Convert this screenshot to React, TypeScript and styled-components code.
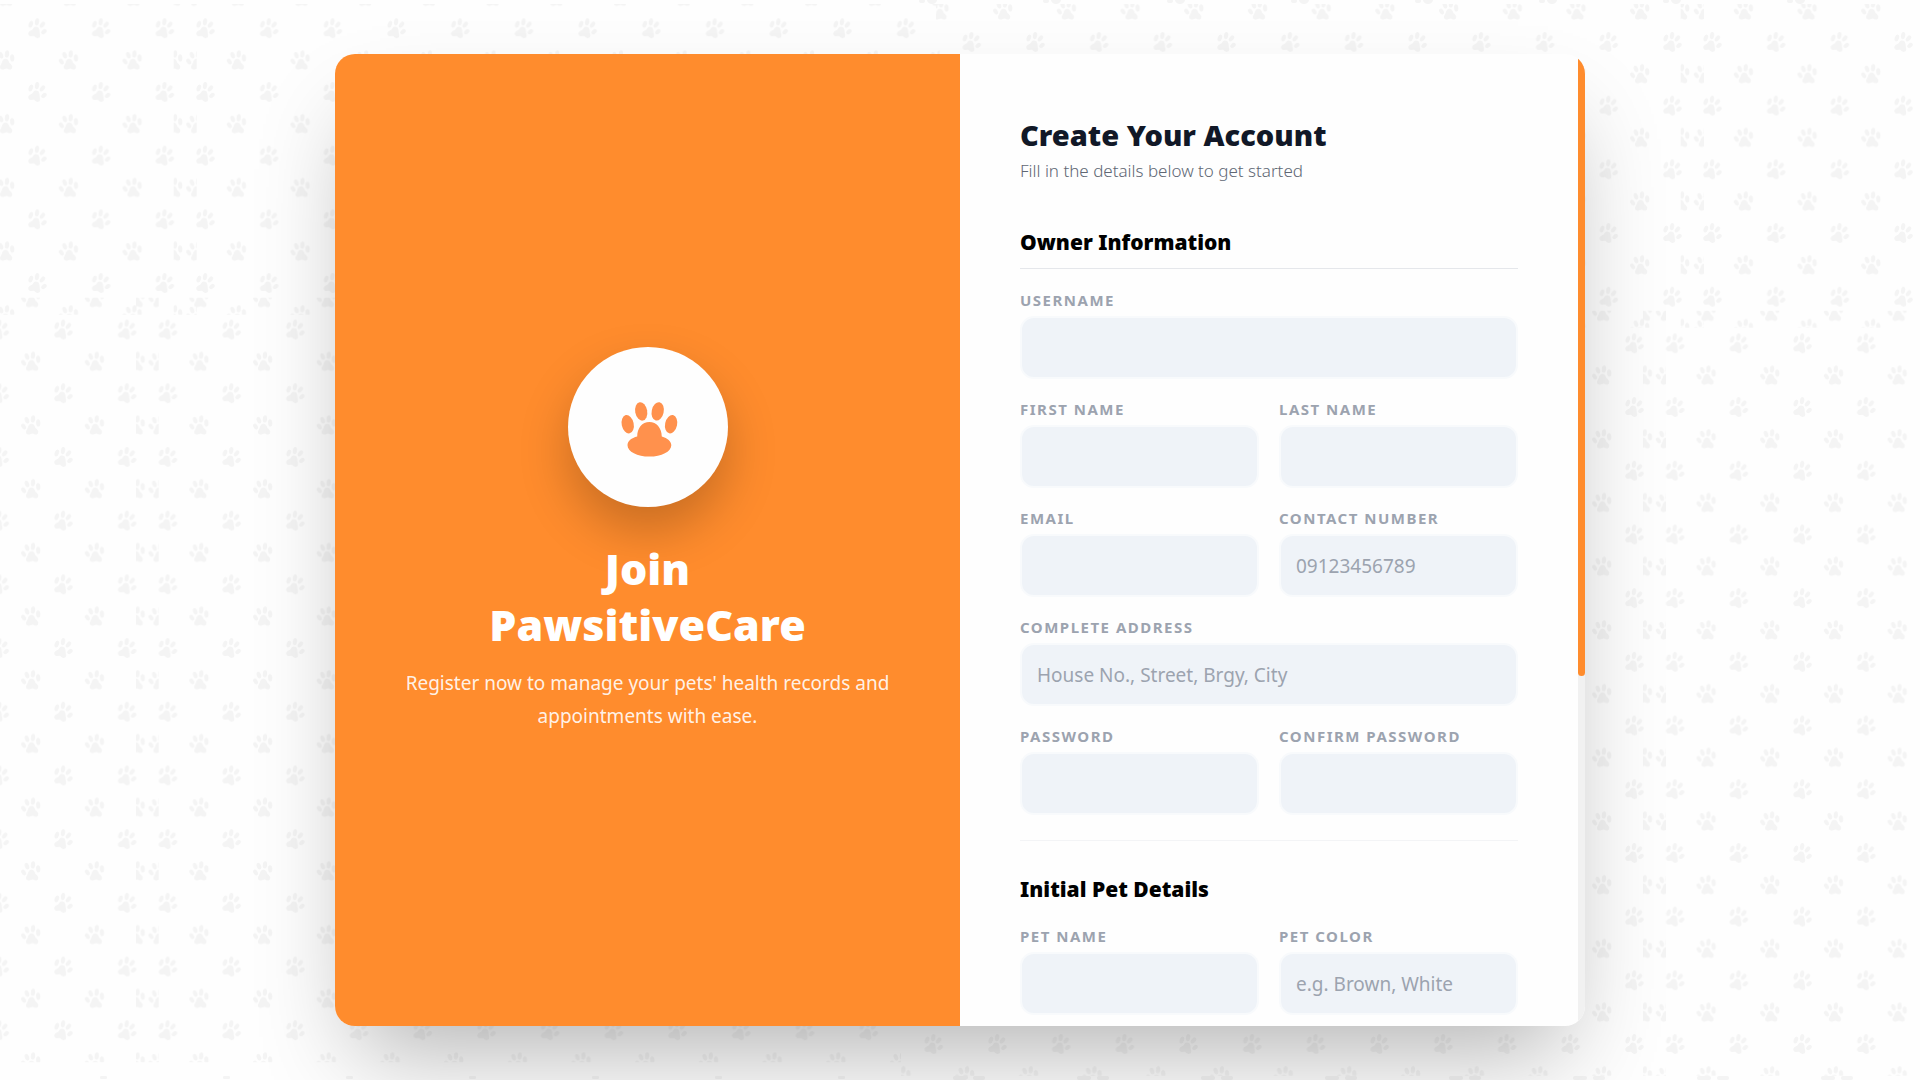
import React, { useId } from "react";
import styled, { createGlobalStyle } from "styled-components";

const ORANGE = "#ff8c2d";
const STEP = 63.7;

const GlobalStyle = createGlobalStyle`
  *, *::before, *::after { box-sizing: border-box; }
  html, body { margin: 0; background: #fefefe; }
  body, input { font-family: "Noto Sans", "Open Sans", "Liberation Sans", sans-serif; }
`;

const Page = styled.main`
  min-height: 100vh;
  display: flex;
  align-items: center;
  justify-content: center;
  overflow: hidden;
  position: relative;
  isolation: isolate;
`;

const Wallpaper = styled.svg`
  position: absolute;
  inset: 0;
  width: 100%;
  height: 100%;
  z-index: -1;
`;

const Card = styled.div`
  width: 100%;
  max-width: 1250px;
  height: 90vh;
  display: grid;
  grid-template-columns: 1fr 1fr;
  border-radius: 20px;
  overflow: hidden;
  background: #fefefe;
  box-shadow: 0 48px 90px -22px rgba(0, 0, 0, 0.29);
`;

const Welcome = styled.section`
  display: flex;
  flex-direction: column;
  align-items: center;
  justify-content: center;
  padding: 60px;
  background: ${ORANGE};
  color: #fff;
  text-align: center;
`;

const LogoDisc = styled.div`
  width: 160px;
  height: 160px;
  border-radius: 50%;
  margin-bottom: 34px;
  background: #fefefe;
  box-shadow: 0 24px 50px rgba(0, 0, 0, 0.22);
  svg { display: block; width: 100%; height: 100%; }
`;

const WelcomeTitle = styled.h1`
  margin: 0 0 14px;
  font-size: 43px;
  line-height: 56px;
  font-weight: 900;
  span { display: block; }
`;

const WelcomeText = styled.p`
  margin: 0;
  font-size: 19px;
  line-height: 33px;
  color: rgba(255, 255, 255, 0.9);
`;

const FormSide = styled.section`
  display: grid;
  grid-template-columns: 1fr 7px;
  min-height: 0;
`;

const FormScroll = styled.form`
  padding: 60px 60px 0;
  min-width: 0;
  min-height: 0;
  overflow: hidden;
`;

const Rail = styled.div`
  background: #f1f1f1;
`;

const Thumb = styled.div`
  height: 64%;
  background: ${ORANGE};
  border-radius: 0 0 4px 4px;
`;

const Title = styled.h2`
  margin: 0;
  font-size: 29px;
  line-height: 42px;
  font-weight: 900;
  color: #111827;
`;

const Subtitle = styled.p`
  margin: 0 0 40px;
  font-size: 17px;
  line-height: 30px;
  font-weight: 300;
  color: #606774;
`;

const Group = styled.section<{ $divided?: boolean }>`
  ${(p) => p.$divided && "margin-top: 25px; padding-top: 32px; border-top: 1px solid #f3f4f6;"}
`;

const GroupTitle = styled.h3<{ $ruled?: boolean }>`
  margin: 0 0 21px;
  font-size: 21px;
  line-height: 32px;
  font-weight: 900;
  color: #000;
  ${(p) => p.$ruled && "padding-bottom: 10px; border-bottom: 1px solid #e5e7eb;"}
`;

const Fields = styled.div`
  display: grid;
  grid-template-columns: 1fr 1fr;
  gap: 20px;
`;

const FieldBox = styled.div<{ $wide?: boolean }>`
  display: flex;
  flex-direction: column;
  gap: 6px;
  min-width: 0;
  ${(p) => p.$wide && "grid-column: 1 / -1;"}
`;

const Label = styled.label`
  font-size: 15px;
  line-height: 20px;
  font-weight: 700;
  letter-spacing: 0.1em;
  text-transform: uppercase;
  color: #9ca3af;
`;

const Input = styled.input`
  width: 100%;
  height: 63px;
  padding: 0 15px;
  border: 2px solid #f8fafc;
  border-radius: 14px;
  background: #eff3f8;
  font-size: 19px;
  color: #111827;
  outline: none;
  &::placeholder { color: #9ca3af; opacity: 1; }
  &:focus { border-color: ${ORANGE}; }
`;

type FieldProps = { label: string; type?: string; placeholder?: string; wide?: boolean };

function Field({ label, type = "text", placeholder, wide }: FieldProps) {
  const id = useId();
  return (
    <FieldBox $wide={wide}>
      <Label htmlFor={id}>{label}</Label>
      <Input id={id} type={type} placeholder={placeholder} />
    </FieldBox>
  );
}

/* Each patch of the wallpaper repeats two paws inside its own rectangle. */
type Patch = { x: number; y: number; w: number; h: number; ax: number; ay: number };

const PATCHES: Patch[] = [
  { x: 0, y: 4, w: 196.7, h: 310.7, ax: 37, ay: 28.3 },
  { x: 173.7, y: 4, w: 766, h: 310.7, ax: 205, ay: 28.3 },
  { x: 936, y: 4, w: 768, h: 323.7, ax: 971.3, ay: 42 },
  { x: 1680.7, y: 4, w: 240, h: 323.7, ax: 1712, ay: 42 },
  { x: 0, y: 297.7, w: 158.7, h: 764.5, ax: 63, ay: 329.6 },
  { x: 136, y: 297.7, w: 765, h: 764.5, ax: 167.5, ay: 329.6 },
  { x: 901, y: 310.7, w: 765, h: 765, ax: 933.3, ay: 343.4 },
  { x: 1643, y: 310.7, w: 277, h: 765, ax: 1674.7, ay: 343.4 },
];

function PawWallpaper() {
  return (
    <Wallpaper aria-hidden="true">
      <defs>
        <g id="paw" fill="#f4f4f4">
          <ellipse cx="-6.2" cy="-4" rx="2.1" ry="3.6" transform="rotate(20 -6.2 -4)" />
          <ellipse cx="0" cy="-6.4" rx="2.1" ry="3.6" transform="rotate(10 0 -6.4)" />
          <ellipse cx="5.4" cy="-3.6" rx="2.1" ry="3.4" transform="rotate(38 5.4 -3.6)" />
          <ellipse cx="6.9" cy="3.4" rx="2.1" ry="3.1" transform="rotate(48 6.9 3.4)" />
          <path d="M-1.2-1.6C-3.2-1.6-3.8.6-5 1.6-7 2.4-9 3.4-8.8 5.6-8.5 8-6 8.2-4 7.6-2.4 7.4-1.8 9.8.6 9.8 3.2 9.6 3.6 7.6 2.9 5.8 2.4 4.4 2.7 2.6 2.2.8 1.7-.8.4-1.6-1.2-1.6Z" />
        </g>
        {PATCHES.map((p, i) => (
          <pattern
            key={i}
            id={`paws${i}`}
            patternUnits="userSpaceOnUse"
            x={p.ax - 16}
            y={p.ay - 16}
            width={STEP}
            height={STEP}
          >
            <use href="#paw" transform="translate(16 16)" />
            <use href="#paw" transform="translate(47.9 47.9) rotate(16) scale(-1 1)" />
          </pattern>
        ))}
      </defs>
      <g fill="#f4f4f4">
        {[0, 1, 2, 3, 4, 5, 6, 7].map((n) => (
          <g key={n}>
            <ellipse cx={932 + n * 124} cy="0" rx="5" ry="4" />
            <ellipse cx={922 + n * 124} cy="1" rx="3" ry="2" />
            <rect x={953 + n * 124} y="1076" width="14" height="4" rx="2" />
            <rect x={973 + n * 124} y="1076" width="12" height="4" rx="2" />
            <rect x={100 + n * 123} y="1076" width="7" height="3" rx="1" />
          </g>
        ))}
      </g>
      {PATCHES.map((p, i) => (
        <rect key={i} x={p.x} y={p.y} width={p.w} height={p.h} fill={`url(#paws${i})`} />
      ))}
    </Wallpaper>
  );
}

function PawLogo() {
  return (
    <svg viewBox="0 0 160 160" role="img" aria-label="Paw">
      <g fill="#ff914d">
        <ellipse cx="59.7" cy="77.2" rx="6" ry="9.3" transform="rotate(-12 59.7 77.2)" />
        <ellipse cx="73.2" cy="64.4" rx="6" ry="9.3" transform="rotate(-10 73.2 64.4)" />
        <ellipse cx="89.7" cy="64.4" rx="6" ry="9.3" transform="rotate(12 89.7 64.4)" />
        <ellipse cx="103.1" cy="77.2" rx="6" ry="9.3" transform="rotate(12 103.1 77.2)" />
        <path d="M69.2 89.6C69.2 81 74.2 75 81.4 75S93.6 81 93.8 89.4C99.5 91 103.3 94.3 103.3 98.2 103.3 104.6 93.5 109.6 81.4 109.6S59.5 104.6 59.5 98.2C59.5 94.3 63.5 91 69.2 89.6Z" />
      </g>
    </svg>
  );
}

export default function App() {
  return (
    <>
      <GlobalStyle />
      <Page>
        <PawWallpaper />
        <Card>
          <Welcome>
            <LogoDisc>
              <PawLogo />
            </LogoDisc>
            <WelcomeTitle>
              <span>Join</span> <span>PawsitiveCare</span>
            </WelcomeTitle>
            <WelcomeText>
              Register now to manage your pets' health records and appointments with ease.
            </WelcomeText>
          </Welcome>
          <FormSide>
            <FormScroll>
              <Title>Create Your Account</Title>
              <Subtitle>Fill in the details below to get started</Subtitle>
              <Group>
                <GroupTitle $ruled>Owner Information</GroupTitle>
                <Fields>
                  <Field label="Username" wide />
                  <Field label="First Name" />
                  <Field label="Last Name" />
                  <Field label="Email" type="email" />
                  <Field label="Contact Number" type="tel" placeholder="09123456789" />
                  <Field label="Complete Address" placeholder="House No., Street, Brgy, City" wide />
                  <Field label="Password" type="password" />
                  <Field label="Confirm Password" type="password" />
                </Fields>
              </Group>
              <Group $divided>
                <GroupTitle>Initial Pet Details</GroupTitle>
                <Fields>
                  <Field label="Pet Name" />
                  <Field label="Pet Color" placeholder="e.g. Brown, White" />
                </Fields>
              </Group>
            </FormScroll>
            <Rail aria-hidden="true">
              <Thumb />
            </Rail>
          </FormSide>
        </Card>
      </Page>
    </>
  );
}
